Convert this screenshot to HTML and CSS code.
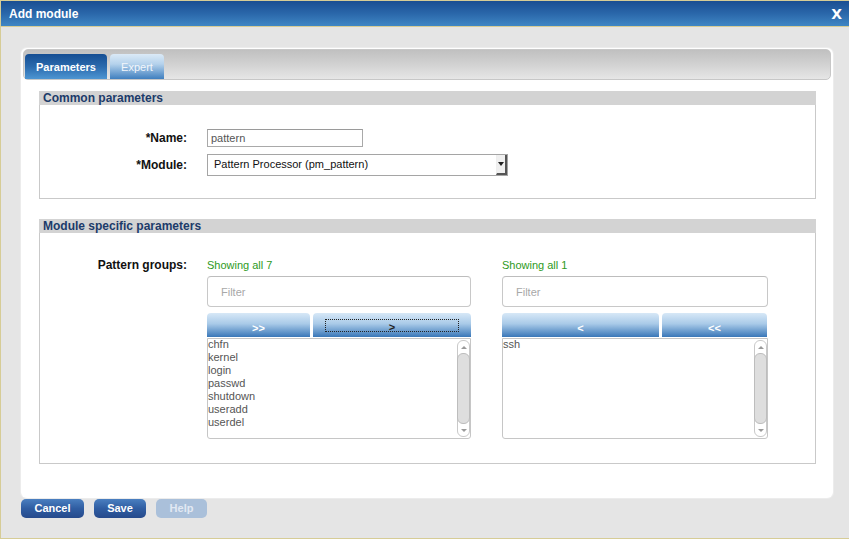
FILE: index.html
```html
<!DOCTYPE html>
<html>
<head>
<meta charset="utf-8">
<link rel="stylesheet" href="styles.css">
</head>
<body>
<div class="window">
  <div class="titlebar">
    <span class="title">Add module</span>
    <span class="close">X</span>
  </div>
  <div class="body">
    <div class="panel">
      <div class="tabstrip">
        <div class="tab active">Parameters</div>
        <div class="tab">Expert</div>
      </div>
      <div class="section s1">
        <div class="sec-head">Common parameters</div>
        <div class="sec-box box1">
          <div class="row">
            <div class="label">*Name:</div>
            <div class="text-input">pattern</div>
          </div>
          <div class="row row2">
            <div class="label">*Module:</div>
            <div class="select">
              <span class="select-text">Pattern Processor (pm_pattern)</span>
              <span class="select-btn"><span class="tri-down"></span></span>
            </div>
          </div>
        </div>
      </div>
      <div class="section s2">
        <div class="sec-head">Module specific parameters</div>
        <div class="sec-box box2">
          <div class="row top">
            <div class="label pg">Pattern groups:</div>
            <div class="duals">
              <div class="dual left">
                <div class="caption">Showing all 7</div>
                <div class="filter">Filter</div>
                <div class="btns">
                  <div class="mbtn narrow">&gt;&gt;</div>
                  <div class="mbtn wide focus"><span class="focusbox">&gt;</span></div>
                </div>
                <div class="listbox">
                  <div class="items">
                    <div>chfn</div>
                    <div>kernel</div>
                    <div>login</div>
                    <div>passwd</div>
                    <div>shutdown</div>
                    <div>useradd</div>
                    <div>userdel</div>
                  </div>
                  <div class="sbar">
                    <div class="sarrow"><span class="tri-up"></span></div>
                    <div class="sthumb"></div>
                    <div class="sarrow"><span class="tri-dn"></span></div>
                  </div>
                </div>
              </div>
              <div class="dual right">
                <div class="caption">Showing all 1</div>
                <div class="filter">Filter</div>
                <div class="btns">
                  <div class="mbtn wide">&lt;</div>
                  <div class="mbtn narrow">&lt;&lt;</div>
                </div>
                <div class="listbox">
                  <div class="items">
                    <div>ssh</div>
                  </div>
                  <div class="sbar">
                    <div class="sarrow"><span class="tri-up"></span></div>
                    <div class="sthumb"></div>
                    <div class="sarrow"><span class="tri-dn"></span></div>
                  </div>
                </div>
              </div>
            </div>
          </div>
        </div>
      </div>
    </div>
    <div class="footer">
      <div class="fbtn cancel">Cancel</div>
      <div class="fbtn save">Save</div>
      <div class="fbtn help">Help</div>
    </div>
  </div>
</div>
</body>
</html>
```

FILE: styles.css
```css
html, body {
  margin: 0;
  padding: 0;
}
body {
  width: 849px;
  height: 539px;
  overflow: hidden;
  font-family: "Liberation Sans", Arial, sans-serif;
  background: #e5e5e5;
}
.window {
  box-sizing: border-box;
  width: 849px;
  height: 539px;
  border-top: 1px solid #d6cc96;
  border-left: 1px solid #d6cc96;
  border-bottom: 1px solid #d6cc96;
  background: #e5e5e5;
  display: flex;
  flex-direction: column;
}
.titlebar {
  height: 25px;
  border-bottom: 1px solid #d6cc96;
  background: linear-gradient(#1a4e92, #2a67aa 50%, #3f86c4);
  display: flex;
  align-items: center;
  justify-content: space-between;
  color: #fff;
  font-weight: bold;
}
.title {
  font-size: 12px;
  padding-left: 8px;
  padding-top: 1px;
}
.close {
  font-size: 14px;
  padding-right: 7px;
  font-family: "DejaVu Sans", sans-serif;
}
.body {
  padding: 21px 15px 0 20px;
}
.panel {
  box-sizing: border-box;
  width: 812px;
  height: 450px;
  background: #fff;
  border-radius: 6px;
  padding: 1px 2px;
  box-shadow: 0 0 0 1px #ececec;
}
.tabstrip {
  box-sizing: border-box;
  height: 31px;
  border: 1px solid #c7c7c7;
  border-radius: 5px;
  background: linear-gradient(#c0c0c0, #d0d0d0 45%, #e6e6e6);
  display: flex;
  align-items: flex-end;
  padding-left: 1px;
  gap: 3px;
}
.tab {
  height: 25px;
  box-sizing: border-box;
  border-radius: 4px 4px 0 0;
  font-size: 11px;
  display: flex;
  align-items: center;
  justify-content: center;
  color: #f2f6fb;
  background: linear-gradient(#dbeaf7, #b5d2ec 40%, #3f7fbf);
  width: 54px;
  padding-top: 1px;
}
.tab.active {
  width: 82px;
  font-weight: bold;
  color: #fff;
  background: linear-gradient(#154e93, #2a6aad 50%, #4d95d2);
}
.section {
  margin: 0 15px 0 16px;
}
.s1 { margin-top: 11px; }
.s2 { margin-top: 20px; }
.sec-head {
  height: 14px;
  background: #d3d3d3;
  color: #1c3b6a;
  font-weight: bold;
  font-size: 12px;
  line-height: 14px;
  padding-left: 4px;
}
.sec-box {
  border: 1px solid #c9c9c9;
  border-top: none;
}
.box1 {
  height: 69px;
  padding-top: 24px;
}
.box2 {
  height: 205px;
  padding-top: 25px;
}
.row {
  display: flex;
  align-items: center;
  gap: 20px;
}
.row.top {
  align-items: flex-start;
}
.row2 { margin-top: 7px; }
.label {
  width: 147px;
  text-align: right;
  font-weight: bold;
  font-size: 12px;
  color: #111;
}
.label.pg {
  padding-top: 0;
}
.text-input {
  box-sizing: border-box;
  width: 156px;
  height: 18px;
  border: 1px solid #a9a9a9;
  border-top-color: #9a9a9a;
  font-size: 11px;
  color: #555;
  padding-left: 3px;
  line-height: 16px;
}
.select {
  box-sizing: border-box;
  width: 301px;
  height: 22px;
  border: 1px solid #a5a5a5;
  display: flex;
  align-items: stretch;
  background: #fff;
}
.select-text {
  flex: 1;
  font-size: 11px;
  color: #111;
  padding-left: 6px;
  line-height: 19px;
}
.select-btn {
  width: 11px;
  box-sizing: border-box;
  border-left: 1px solid #eee;
  border-right: 2px solid #555;
  border-bottom: 2px solid #555;
  background: #f0f0f0;
  display: flex;
  align-items: center;
  justify-content: center;
}
.tri-down {
  width: 0;
  height: 0;
  border-left: 3px solid transparent;
  border-right: 3px solid transparent;
  border-top: 4px solid #222;
}
.duals {
  display: flex;
  gap: 31px;
}
.dual {
  display: flex;
  flex-direction: column;
}
.dual.left { width: 264px; }
.dual.right { width: 266px; }
.caption {
  font-size: 11px;
  color: #2e9a24;
  height: 14px;
  line-height: 14px;
}
.filter {
  box-sizing: border-box;
  margin-top: 4px;
  height: 31px;
  border: 1px solid #c8c8c8;
  border-top-color: #bdbdbd;
  border-radius: 4px;
  font-size: 11px;
  color: #a8a8a8;
  padding-left: 13px;
  line-height: 30px;
}
.btns {
  margin-top: 6px;
  display: flex;
  gap: 3px;
}
.mbtn {
  height: 24px;
  border-radius: 4px 4px 0 0;
  background: linear-gradient(#d7e8f7, #a9cae8 45%, #3977b8);
  color: #fff;
  font-weight: bold;
  font-size: 11px;
  display: flex;
  align-items: center;
  justify-content: center;
  padding-top: 6px;
  box-sizing: border-box;
}
.left .narrow { width: 103px; }
.left .wide { width: 158px; }
.right .wide { width: 157px; }
.right .narrow { width: 105px; }
.mbtn.focus {
  padding-top: 0;
}
.focusbox {
  box-sizing: border-box;
  width: 134px;
  height: 13px;
  margin-top: 1px;
  border: 1px dotted #222;
  color: #222;
  text-align: center;
  line-height: 15px;
}
.listbox {
  box-sizing: border-box;
  margin-top: 1px;
  height: 101px;
  border: 1px solid #c6c6c6;
  border-radius: 0 0 3px 3px;
  display: flex;
}
.items {
  flex: 1;
  font-size: 11px;
  color: #555;
  line-height: 13px;
  margin-top: -1px;
}
.sbar {
  width: 13px;
  margin: 1px 0 1px 0;
  border: 1px solid #c9c9c9;
  border-radius: 6px;
  display: flex;
  flex-direction: column;
  background: #fff;
  box-sizing: border-box;
}
.sarrow {
  height: 12px;
  display: flex;
  align-items: center;
  justify-content: center;
}
.sthumb {
  flex: 1;
  background: #dedede;
  border: 1px solid #bdbdbd;
  border-radius: 6px;
  margin: 0 -1px;
}
.tri-up {
  width: 0;
  height: 0;
  border-left: 3px solid transparent;
  border-right: 3px solid transparent;
  border-bottom: 3px solid #9a9a9a;
}
.tri-dn {
  width: 0;
  height: 0;
  border-left: 3px solid transparent;
  border-right: 3px solid transparent;
  border-top: 3px solid #9a9a9a;
}
.footer {
  margin-top: 1px;
  display: flex;
  gap: 10px;
}
.fbtn {
  height: 19px;
  border-radius: 5px;
  font-size: 11px;
  font-weight: bold;
  color: #fff;
  display: flex;
  align-items: center;
  justify-content: center;
  padding-bottom: 2px;
  box-sizing: border-box;
  background: linear-gradient(#4a7fc0, #2f5da2 50%, #264a8c);
}
.cancel { width: 63px; }
.save { width: 52px; }
.help {
  width: 51px;
  background: #aac0da;
  color: #e2e9f3;
}
```
